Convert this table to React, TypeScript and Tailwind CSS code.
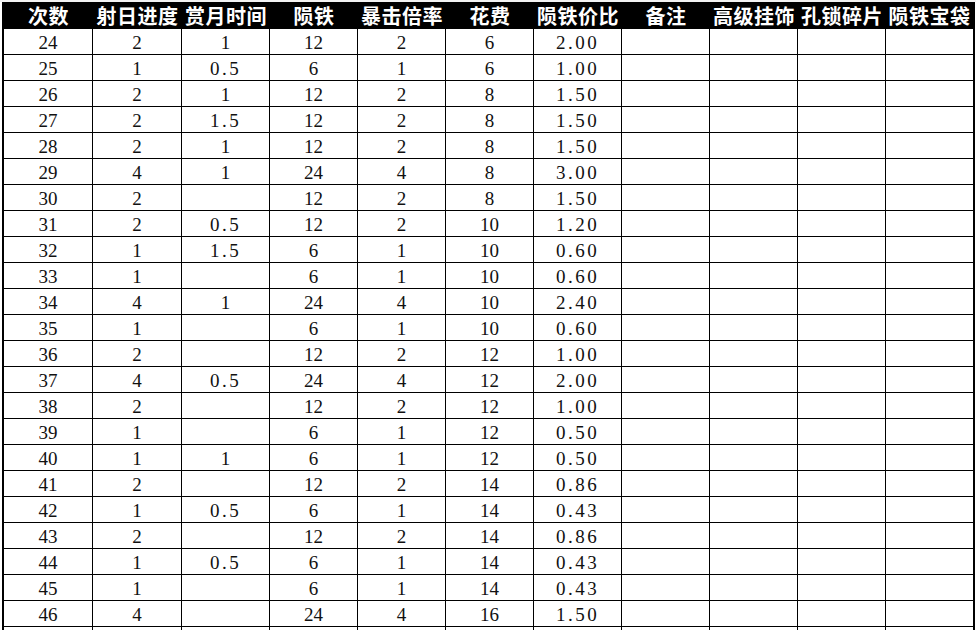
const HEADERS = ["次数", "射日进度", "赏月时间", "陨铁", "暴击倍率", "花费", "陨铁价比", "备注", "高级挂饰", "孔锁碎片", "陨铁宝袋"];

// 次数, 射日进度, 赏月时间, 陨铁, 暴击倍率, 花费, 陨铁价比
const ROWS: string[][] = [
  ["24", "2", "1", "12", "2", "6", "2.00"],
  ["25", "1", "0.5", "6", "1", "6", "1.00"],
  ["26", "2", "1", "12", "2", "8", "1.50"],
  ["27", "2", "1.5", "12", "2", "8", "1.50"],
  ["28", "2", "1", "12", "2", "8", "1.50"],
  ["29", "4", "1", "24", "4", "8", "3.00"],
  ["30", "2", "", "12", "2", "8", "1.50"],
  ["31", "2", "0.5", "12", "2", "10", "1.20"],
  ["32", "1", "1.5", "6", "1", "10", "0.60"],
  ["33", "1", "", "6", "1", "10", "0.60"],
  ["34", "4", "1", "24", "4", "10", "2.40"],
  ["35", "1", "", "6", "1", "10", "0.60"],
  ["36", "2", "", "12", "2", "12", "1.00"],
  ["37", "4", "0.5", "24", "4", "12", "2.00"],
  ["38", "2", "", "12", "2", "12", "1.00"],
  ["39", "1", "", "6", "1", "12", "0.50"],
  ["40", "1", "1", "6", "1", "12", "0.50"],
  ["41", "2", "", "12", "2", "14", "0.86"],
  ["42", "1", "0.5", "6", "1", "14", "0.43"],
  ["43", "2", "", "12", "2", "14", "0.86"],
  ["44", "1", "0.5", "6", "1", "14", "0.43"],
  ["45", "1", "", "6", "1", "14", "0.43"],
  ["46", "4", "", "24", "4", "16", "1.50"],
];

const GRID = "grid grid-cols-[89px_89px_repeat(8,88px)_87px]";

function Cell({ value, last }: { value: string; last: boolean }) {
  return (
    <div
      className={
        "h-[26px] pt-[3px] flex items-center justify-center border-b border-black text-[19px] text-[#111] " +
        (last ? "" : "border-r")
      }
    >
      <span className={value.includes(".") ? "tracking-[2.5px]" : ""}>{value}</span>
    </div>
  );
}

export default function App() {
  return (
    <div
      className="w-[976px] h-[630px] overflow-hidden bg-white"
      style={{ fontFamily: '"Liberation Serif", "Noto Sans CJK SC", serif' }}
    >
      <div className="h-[2px] bg-[#f3f3f3]" />
      <div className="pl-[2px]">
        <div className="w-[973px] border-l-2 border-r-2 border-black">
          <div className={GRID + " bg-black h-[27px]"}>
            {HEADERS.map((h) => (
              <div
                key={h}
                className="flex items-center justify-center text-white text-[20px] font-bold leading-none tracking-[0.5px]"
                style={{ fontFamily: '"Noto Sans CJK SC", sans-serif' }}
              >
                {h}
              </div>
            ))}
          </div>
          {ROWS.map((r) => (
            <div key={r[0]} className={GRID}>
              {HEADERS.map((_, i) => (
                <Cell key={i} value={r[i] ?? ""} last={i === HEADERS.length - 1} />
              ))}
            </div>
          ))}
          <div className={GRID + " h-[10px]"}>
            {HEADERS.map((_, i) => (
              <div key={i} className={i === HEADERS.length - 1 ? "" : "border-r border-black"} />
            ))}
          </div>
        </div>
      </div>
    </div>
  );
}
